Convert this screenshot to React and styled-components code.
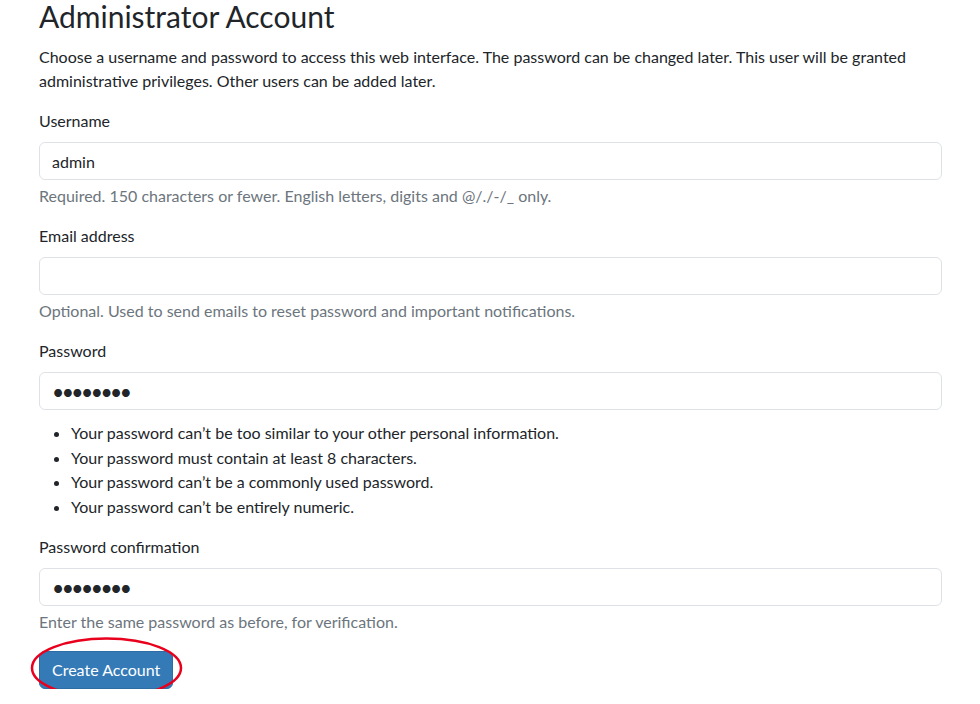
import React from "react";
import styled, { createGlobalStyle } from "styled-components";

const GlobalStyle = createGlobalStyle`
  html, body {
    margin: 0;
    padding: 0;
    background: #ffffff;
  }
  body {
    font-family: Lato, "Noto Sans", "Liberation Sans", sans-serif;
    font-size: 16px;
    line-height: 1.5;
    color: #212529;
    overflow: hidden;
  }
  * {
    box-sizing: border-box;
  }
`;

const Page = styled.main`
  width: 903px;
  margin-left: 39px;
`;

const Title = styled.h3`
  margin: 0 0 12px;
  font-size: 30px;
  font-weight: 400;
  line-height: 33px;
`;

const Intro = styled.p`
  margin: 0 0 16px;
`;

const Field = styled.div`
  margin-bottom: 16px;
`;

const Label = styled.label`
  display: block;
  margin-bottom: 9px;
`;

const Input = styled.input`
  display: block;
  width: 100%;
  height: 38px;
  padding: 6px 12px;
  font-family: inherit;
  font-size: 16px;
  line-height: 1.5;
  color: #212529;
  background: #fff;
  border: 1px solid #dee2e6;
  border-radius: 6px;
  outline: none;

  &[type="password"] {
    font-size: 21px;
    letter-spacing: -2.5px;
    padding: 0 12px;
    line-height: 36px;
  }
`;

const Help = styled.div`
  margin-top: 4px;
  line-height: 24px;
  color: #6c757d;
`;

const HintList = styled.ul`
  margin: 11px 0 0;
  padding-left: 32px;
  li {
    line-height: 24.5px;
  }
`;

const Actions = styled.div`
  position: relative;
  display: inline-block;
  margin-top: 1px;
`;

const Button = styled.button`
  font-family: inherit;
  font-size: 16px;
  line-height: 24px;
  padding: 6px 12px;
  color: #fff;
  background: #337ab7;
  border: 1px solid #2e6da4;
  border-radius: 6px;
  cursor: pointer;
`;

const Mark = styled.svg`
  position: absolute;
  left: -10px;
  top: -15px;
  pointer-events: none;
  overflow: visible;
`;

const passwordHints = [
  "Your password can\u2019t be too similar to your other personal information.",
  "Your password must contain at least 8 characters.",
  "Your password can\u2019t be a commonly used password.",
  "Your password can\u2019t be entirely numeric.",
];

export default function App() {
  return (
    <>
      <GlobalStyle />
      <Page>
        <Title>Administrator Account</Title>
        <Intro>
          Choose a username and password to access this web interface. The
          password can be changed later. This user will be granted
          administrative privileges. Other users can be added later.
        </Intro>

        <Field>
          <Label>Username</Label>
          <Input type="text" defaultValue="admin" />
          <Help>
            Required. 150 characters or fewer. English letters, digits and
            @/./-/_ only.
          </Help>
        </Field>

        <Field>
          <Label>Email address</Label>
          <Input type="email" />
          <Help>
            Optional. Used to send emails to reset password and important
            notifications.
          </Help>
        </Field>

        <Field>
          <Label>Password</Label>
          <Input type="password" defaultValue="12345678" />
          <HintList>
            {passwordHints.map((h) => (
              <li key={h}>{h}</li>
            ))}
          </HintList>
        </Field>

        <Field>
          <Label>Password confirmation</Label>
          <Input type="password" defaultValue="12345678" />
          <Help>Enter the same password as before, for verification.</Help>
        </Field>

        <Actions>
          <Button type="button">Create Account</Button>
          <Mark width="156" height="64" viewBox="0 0 156 64">
            <ellipse
              cx="77.5"
              cy="32"
              rx="74.5"
              ry="29.5"
              fill="none"
              stroke="#e8001c"
              strokeWidth="2.5"
            />
          </Mark>
        </Actions>
      </Page>
    </>
  );
}
